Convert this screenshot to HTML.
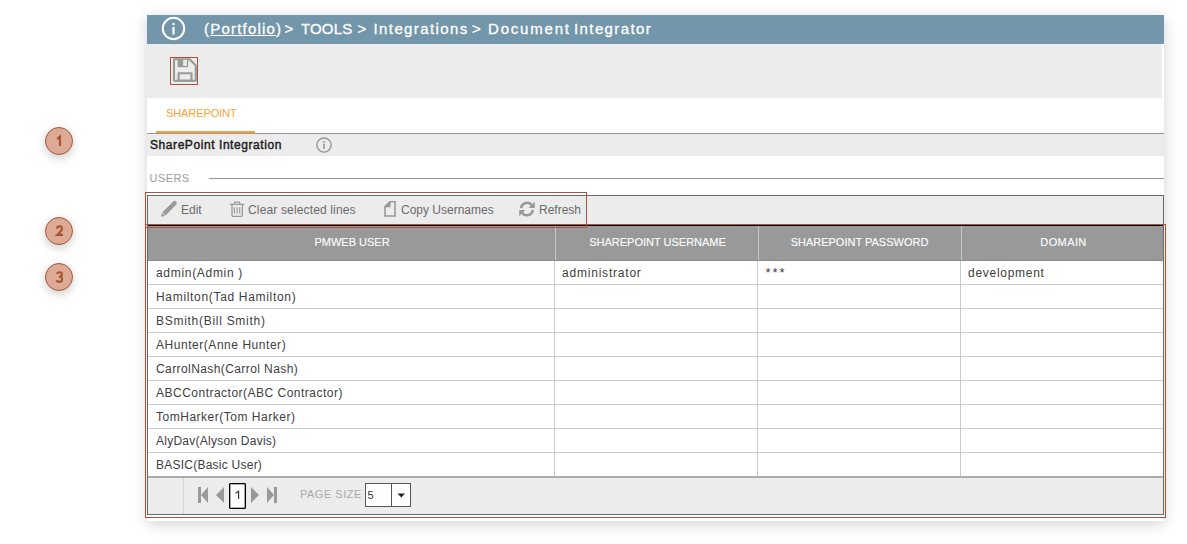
<!DOCTYPE html>
<html><head><meta charset="utf-8">
<style>
*{box-sizing:border-box;margin:0;padding:0}
html,body{width:1187px;height:544px;background:#fff;overflow:hidden;font-family:"Liberation Sans",sans-serif;position:relative}
.a{position:absolute}
.panel{left:147px;top:15px;width:1017px;height:506px;background:#fff;box-shadow:0 3px 14px rgba(0,0,0,0.18)}
.hdr{left:147px;top:15px;width:1017px;height:29px;background:#7396aa}
.crumb{top:19px;font-size:15px;color:#fff;white-space:pre;line-height:20px;-webkit-text-stroke:0.3px #fff}
.crumb u{text-decoration:underline;text-underline-offset:1px}
.tbar{left:147px;top:44px;width:1015px;height:54px;background:#ececec}
.savebox{left:170px;top:57px;width:28px;height:28px;border:1px solid #a7553a}
.tabtxt{left:166px;top:106px;font-size:11px;color:#f6a43a;letter-spacing:-0.1px;line-height:14px}
.tabbar{left:156px;top:131px;width:99px;height:2px;background:#f5a23a}
.tabline{left:147px;top:133px;width:1017px;height:1px;background:#999}
.band{left:147px;top:134px;width:1017px;height:22px;background:#ececec}
.sec{left:150px;top:138px;font-size:12px;color:#1e1e1e;line-height:14px;letter-spacing:0.57px;-webkit-text-stroke:0.45px #1e1e1e}
.users{left:149.5px;top:171px;font-size:11px;color:#9c9c9c;line-height:14px;letter-spacing:0.45px}
.uline{left:209px;top:178px;width:955px;height:1px;background:#999}
.grid{left:147px;top:195px;width:1017px;height:320px;border:1px solid #6b6b6b;background:#fff}
.gtb{left:148px;top:196px;width:1015px;height:30px;background:#ececec;border-bottom:1px solid #000}
.ti{font-size:12px;color:#6b6b6b;line-height:14px;top:202.5px}
.th{left:148px;top:226px;width:1015px;height:35px;background:#999;border-bottom:1px solid #8a8a8a}
.htx{top:235px;font-size:11px;color:#fff;line-height:14px;text-align:center;font-weight:normal;-webkit-text-stroke:0.1px #fff}
.vl{width:1px;background:#ccc}
.hl{left:148px;width:1015px;height:1px;background:#ccc}
.cell{font-size:12px;color:#404040;line-height:14px;white-space:pre}
.pager{left:148px;top:476px;width:1015px;height:38px;background:#ececec;border-top:2px solid #ababab}
.red{border:1px solid #a7553a}
.badge{width:28px;height:28px;border-radius:50%;background:#dcaa95;border:1px solid #a7553a;box-shadow:0 3px 10px rgba(0,0,0,0.2);color:#a8502f;font-weight:bold;font-size:13px;line-height:26px;text-align:center}
</style></head><body>
<div class="a badge" style="left:45px;top:127px"></div><svg class="a" style="left:45px;top:127px" width="28" height="28" viewBox="0 0 28 28"><path d="M14.95 19 V9.6 L12.1 12" fill="none" stroke="#a9522f" stroke-width="2.1" stroke-linecap="butt" stroke-linejoin="miter"/></svg>
<div class="a badge" style="left:45px;top:217px"></div><svg class="a" style="left:45px;top:217px" width="28" height="28" viewBox="0 0 28 28"><path d="M11.9 11.6 Q12.3 9.2 14.6 9.2 Q17 9.2 17 11.6 Q17 13.4 14.2 16 L12.2 17.9 H17.9" fill="none" stroke="#a9522f" stroke-width="2.1" stroke-linecap="butt" stroke-linejoin="miter"/></svg>
<div class="a badge" style="left:45px;top:263px"></div><svg class="a" style="left:45px;top:263px" width="28" height="28" viewBox="0 0 28 28"><path d="M11.8 10.9 Q12.6 9.2 14.5 9.2 Q16.9 9.2 16.9 11.4 Q16.9 13.8 14 13.8 Q17.2 13.8 17.2 16.3 Q17.2 18.9 14.4 18.9 Q12.3 18.9 11.5 17.2" fill="none" stroke="#a9522f" stroke-width="2.1" stroke-linecap="butt" stroke-linejoin="miter"/></svg>

<div class="a panel"></div>
<div class="a hdr"></div>
<svg class="a" style="left:161px;top:16px" width="25" height="25" viewBox="0 0 25 25"><circle cx="12.5" cy="12.5" r="10.7" fill="none" stroke="#fff" stroke-width="2"/><rect x="11.4" y="11" width="2.2" height="7.5" fill="#fff"/><rect x="11.4" y="7" width="2.2" height="2.2" fill="#fff"/></svg>
<div class="a crumb" style="left:204px;letter-spacing:1.2px">(<u>Portfolio</u>)</div><div class="a crumb" style="left:284.5px;letter-spacing:0">&gt;</div><div class="a crumb" style="left:301px;letter-spacing:0.15px">TOOLS</div><div class="a crumb" style="left:357.5px;letter-spacing:0">&gt;</div><div class="a crumb" style="left:373.5px;letter-spacing:1.4px">Integrations</div><div class="a crumb" style="left:472px;letter-spacing:0">&gt;</div><div class="a crumb" style="left:488px;letter-spacing:1.8px">Document</div><div class="a crumb" style="left:574px;letter-spacing:1.4px">Integrator</div>

<div class="a tbar"></div>
<div class="a savebox"></div>
<svg class="a" style="left:172px;top:58px" width="26" height="26" viewBox="0 0 26 26"><path d="M2 1.2 H17.6 L23.8 7.4 V22.8 H2 Z" fill="none" stroke="#999" stroke-width="2.1" stroke-linejoin="round"/><rect x="5.6" y="1" width="10.6" height="8.2" rx="1" fill="#999"/><rect x="11.1" y="1.8" width="3.8" height="6.1" fill="#ececec"/><rect x="6.6" y="15.2" width="12.9" height="7.6" fill="none" stroke="#999" stroke-width="2.1" stroke-linejoin="round"/></svg>

<div class="a tabtxt">SHAREPOINT</div>
<div class="a tabbar"></div>
<div class="a tabline"></div>
<div class="a band"></div>
<div class="a sec">SharePoint Integration</div>
<svg class="a" style="left:316px;top:137px" width="16" height="16" viewBox="0 0 16 16"><circle cx="8" cy="8" r="7.1" fill="none" stroke="#999" stroke-width="1.45"/><rect x="7.15" y="6.7" width="1.7" height="5.1" fill="#999"/><rect x="7.15" y="4.1" width="1.7" height="1.6" fill="#999"/></svg>

<div class="a users">USERS</div>
<div class="a uline"></div>

<div class="a grid"></div>
<div class="a gtb"></div>
<svg class="a" style="left:160px;top:200px" width="18" height="18" viewBox="0 0 18 18"><path d="M1 16.8 L1.92 12.77 L5.03 15.88 Z" fill="#999"/><path d="M3.97 13.83 L11.75 6.05" stroke="#999" stroke-width="4.4"/><path d="M12.7 5.1 L14.6 3.2" stroke="#999" stroke-width="4.4" stroke-linecap="round"/></svg>
<svg class="a" style="left:229px;top:200px" width="16" height="18" viewBox="0 0 16 18"><path d="M4.9 4.3 L5.9 2.1 H10.1 L11.1 4.3 M0.8 4.3 H15.2 M3 4.3 V15.6 Q3 16.4 3.8 16.4 H12.5 Q13.3 16.4 13.3 15.6 V4.3" fill="none" stroke="#999" stroke-width="1.3"/><path d="M5.4 7.2 V13.6 M8.1 7.2 V13.6 M10.7 7.2 V13.6" fill="none" stroke="#999" stroke-width="1.1"/></svg>
<svg class="a" style="left:383px;top:201px" width="14" height="17" viewBox="0 0 14 17"><path d="M2 5.6 L7 0.8 H12 V15 H2 Z" fill="none" stroke="#999" stroke-width="1.6"/><path d="M2 5.6 L7 0.8 V5.6 Z" fill="#999" stroke="#999" stroke-width="1.2" stroke-linejoin="round"/></svg>
<svg class="a" style="left:518px;top:200px" width="18" height="18" viewBox="0 0 18 18"><path d="M3.2 8.2 A6 6 0 0 1 14 5.2" fill="none" stroke="#999" stroke-width="2.6"/><path d="M16.8 1.8 V8 H10.6 Z" fill="#999"/><path d="M14.8 9.8 A6 6 0 0 1 4 12.8" fill="none" stroke="#999" stroke-width="2.6"/><path d="M1.2 16.2 V10 H7.4 Z" fill="#999"/></svg>
<div class="a ti" style="left:181px">Edit</div>
<div class="a ti" style="left:248px;letter-spacing:0.15px">Clear selected lines</div>
<div class="a ti" style="left:401px">Copy Usernames</div>
<div class="a ti" style="left:539px">Refresh</div>

<div class="a th"></div>
<div class="a htx" style="left:149px;width:406px">PMWEB USER</div>
<div class="a htx" style="left:556px;width:203px">SHAREPOINT USERNAME</div>
<div class="a htx" style="left:758px;width:203px">SHAREPOINT PASSWORD</div>
<div class="a htx" style="left:962.5px;width:202px;letter-spacing:0.4px">DOMAIN</div>

<div class="a hl" style="top:284px"></div>
<div class="a hl" style="top:308px"></div>
<div class="a hl" style="top:332px"></div>
<div class="a hl" style="top:356px"></div>
<div class="a hl" style="top:380px"></div>
<div class="a hl" style="top:404px"></div>
<div class="a hl" style="top:428px"></div>
<div class="a hl" style="top:452px"></div>
<div class="a vl" style="left:554px;top:261px;height:216px"></div>
<div class="a vl" style="left:757px;top:261px;height:216px"></div>
<div class="a vl" style="left:960px;top:261px;height:216px"></div>
<div class="a vl" style="left:555px;top:226px;height:34px;background:#c8c8c8"></div>
<div class="a vl" style="left:758px;top:226px;height:34px;background:#c8c8c8"></div>
<div class="a vl" style="left:961px;top:226px;height:34px;background:#c8c8c8"></div>
<div class="a cell" style="left:156px;top:266px;letter-spacing:0.69px">admin(Admin )</div>
<div class="a cell" style="left:156px;top:290px;letter-spacing:0.68px">Hamilton(Tad Hamilton)</div>
<div class="a cell" style="left:156px;top:314px;letter-spacing:0.72px">BSmith(Bill Smith)</div>
<div class="a cell" style="left:156px;top:338px;letter-spacing:0.54px">AHunter(Anne Hunter)</div>
<div class="a cell" style="left:156px;top:362px;letter-spacing:0.41px">CarrolNash(Carrol Nash)</div>
<div class="a cell" style="left:156px;top:386px;letter-spacing:0.49px">ABCContractor(ABC Contractor)</div>
<div class="a cell" style="left:156px;top:410px;letter-spacing:0.51px">TomHarker(Tom Harker)</div>
<div class="a cell" style="left:156px;top:434px;letter-spacing:0.25px">AlyDav(Alyson Davis)</div>
<div class="a cell" style="left:156px;top:458px;letter-spacing:0.24px">BASIC(Basic User)</div>
<div class="a cell" style="left:562px;top:266px;letter-spacing:0.79px">administrator</div>
<div class="a cell" style="left:765.5px;top:266px;font-size:13px;letter-spacing:1.9px">***</div>
<div class="a cell" style="left:968px;top:266px;letter-spacing:0.72px">development</div>
<div class="a pager"></div>
<div class="a" style="left:183px;top:478px;width:1px;height:36px;background:#d4d4d4"></div>
<svg class="a" style="left:196px;top:485px" width="84" height="20" viewBox="0 0 84 20">
<rect x="2" y="2" width="3" height="16" fill="#999"/><path d="M5 10 L12 2 V18 Z" fill="#999"/>
<path d="M20 10 L28 2 V18 Z" fill="#999"/>
<path d="M55 2 L63 10 L55 18 Z" fill="#999"/>
<path d="M71 2 L78 10 L71 18 Z" fill="#999"/><rect x="78" y="2" width="3" height="16" fill="#999"/>
</svg>
<div class="a" style="left:229px;top:483px;width:17px;height:26px;border:1px solid #000;box-shadow:inset 0 0 0 0.6px rgba(0,0,0,0.6);border-radius:1px;background:#fff"></div>
<svg class="a" style="left:234px;top:490px" width="7" height="10" viewBox="0 0 7 10"><path d="M4.6 9 V1.2 L1.6 3.2" fill="none" stroke="#333" stroke-width="1.15"/></svg>
<div class="a" style="left:300px;top:487px;font-size:11px;line-height:14px;color:#aaa;letter-spacing:0.5px">PAGE SIZE</div>
<div class="a" style="left:365px;top:483px;width:46px;height:24px;border:1px solid #555;background:#fff"></div>
<div class="a" style="left:391px;top:484px;width:1px;height:22px;background:#555"></div>
<div class="a" style="left:367.5px;top:488px;font-size:11px;line-height:14px;color:#333">5</div>
<svg class="a" style="left:397px;top:493px" width="9" height="5" viewBox="0 0 9 5"><path d="M0.5 0.5 H8 L4.25 4.5 Z" fill="#222"/></svg>
<div class="a red" style="left:145px;top:192px;width:442px;height:36px"></div>
<div class="a red" style="left:145px;top:224px;width:1021px;height:294px"></div>
</body></html>
